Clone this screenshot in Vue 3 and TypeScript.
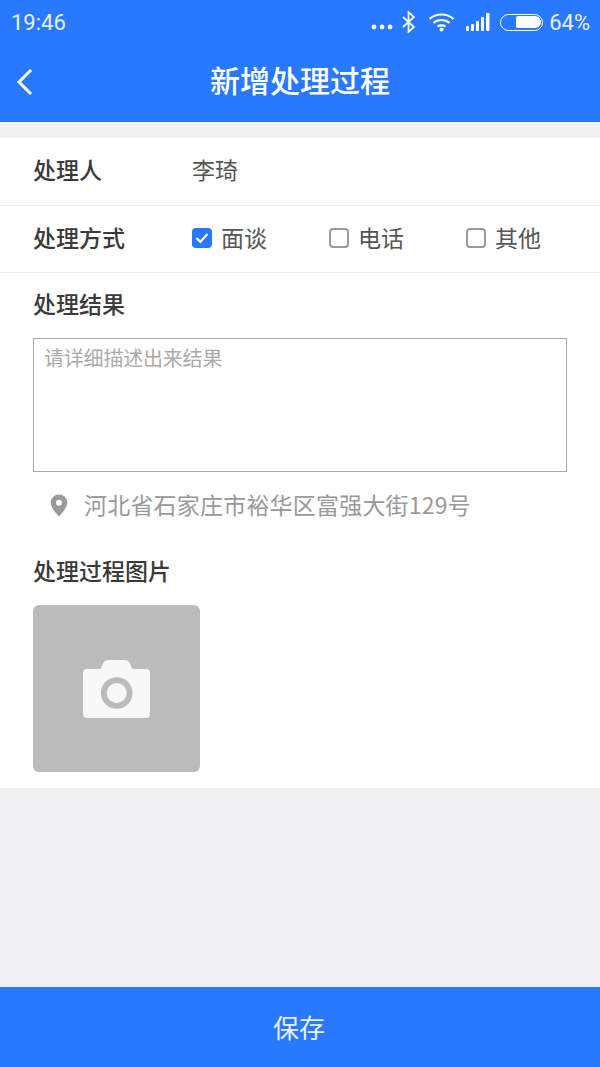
<script setup lang="ts">
import { ref } from "vue";

const methods = ["面谈", "电话", "其他"];
const method = ref("面谈");
const note = ref("");
</script>

<template>
  <div class="page">
    <header class="top">
      <div class="status">
        <span class="time">19:46</span>
        <div class="status-right">
          <svg class="dots" width="22" height="6" viewBox="0 0 22 6"><circle cx="3" cy="3" r="2.4" /><circle cx="11" cy="3" r="2.4" /><circle cx="19" cy="3" r="2.4" /></svg>
          <svg class="bt" width="16" height="22" viewBox="0 0 16 22"><path d="M2 6l11 10-5.500 5V1l5.500 5L2 16" fill="none" stroke="#fff" stroke-width="1.700" /></svg>
          <svg class="wifi" width="27" height="20" viewBox="0 0 27 20"><g fill="none" stroke="#fff" stroke-width="2.200"><path d="M1.500 7C8 1 19 1 25.500 7" /><path d="M5.500 11C10 7 17 7 21.500 11" /><path d="M9.500 14.500C11.500 13 15.500 13 17.500 14.500" /></g><circle cx="13.500" cy="17.500" r="2" fill="#fff" /></svg>
          <svg class="signal" width="25" height="20" viewBox="0 0 25 20" fill="#fff"><rect x="0" y="14" width="3" height="5" rx="1" /><rect x="5" y="12" width="3" height="7" rx="1" /><rect x="10" y="9" width="3" height="10" rx="1" /><rect x="15" y="5" width="3" height="14" rx="1" /><rect x="20" y="1" width="3.500" height="18" rx="1" /></svg>
          <div class="battery"><div class="battery-fill"></div></div>
          <span class="pct">64%</span>
        </div>
      </div>
      <div class="nav">
        <svg class="back" width="18" height="28" viewBox="0 0 18 28"><path d="M15 2L3 14l12 12" fill="none" stroke="#fff" stroke-width="3" /></svg>
        <h1 class="title">新增处理过程</h1>
      </div>
    </header>

    <main class="form">
      <div class="row">
        <span class="label">处理人</span>
        <span class="value">李琦</span>
      </div>
      <div class="row">
        <span class="label">处理方式</span>
        <div class="options">
          <label v-for="m in methods" :key="m" class="option" @click="method = m">
            <span class="box" :class="{ checked: method === m }">
              <svg v-if="method === m" width="14" height="12" viewBox="0 0 14 12"><path d="M1.500 6l3.800 3.800L12.500 2" fill="none" stroke="#fff" stroke-width="2.200" /></svg>
            </span>
            <span class="option-text">{{ m }}</span>
          </label>
        </div>
      </div>

      <section class="result">
        <div class="label">处理结果</div>
        <textarea v-model="note" class="note" placeholder="请详细描述出来结果"></textarea>
        <div class="location">
          <svg class="pin" width="18" height="23" viewBox="0 0 18 23"><path fill-rule="evenodd" d="M9 0.500a8.300 8.300 0 0 1 8.300 8.300C17.300 14 9 22.500 9 22.500S0.700 14 0.700 8.800A8.300 8.300 0 0 1 9 0.500zm0 5.300a3 3 0 1 0 0 6 3 3 0 0 0 0-6z" fill="#999" /></svg>
          <span class="address">河北省石家庄市裕华区富强大街129号</span>
        </div>
        <div class="label pics">处理过程图片</div>
        <div class="photo">
          <svg width="67" height="58" viewBox="0 0 67 58"><path fill-rule="evenodd" d="M4 9h13q1 0 2-3q1.500-6 6-6h17q4.500 0 6 6q1 3 2 3h13q4 0 4 4v41q0 4-4 4H4q-4 0-4-4V13q0-4 4-4zm29.700 8.200a15.800 15.800 0 1 0 0 31.600 15.800 15.800 0 0 0 0-31.600zm0 5.800a10 10 0 1 1 0 20 10 10 0 0 1 0-20z" fill="#f8f8f8" /></svg>
        </div>
      </section>
    </main>

    <div class="spacer"></div>

    <button class="save">保存</button>
  </div>
</template>

<style>
body {
  margin: 0;
}
</style>

<style scoped>
.page {
  width: 600px;
  height: 1067px;
  display: flex;
  flex-direction: column;
  background: #f0f1f3;
  font-family: "Noto Sans CJK SC", "Noto Sans", sans-serif;
  overflow: hidden;
}

.top {
  height: 122px;
  background: #2979ff;
  color: #fff;
  flex-shrink: 0;
}

.status {
  height: 44px;
  padding: 0 10px 0 11px;
  display: flex;
  align-items: center;
  justify-content: space-between;
  font-family: "Roboto", sans-serif;
  font-size: 22px;
  color: #e8f0ff;
}

.status-right {
  display: flex;
  align-items: center;
}

.dots {
  fill: #fff;
  margin-top: 10px;
  margin-right: 8px;
}

.bt {
  margin-right: 11px;
}

.wifi {
  margin-right: 11px;
}

.signal {
  margin-right: 9px;
}

.battery {
  width: 43px;
  height: 17px;
  box-sizing: border-box;
  border: 1.500px solid #fff;
  border-radius: 9px;
  margin-right: 6px;
  padding: 1.500px;
  display: flex;
  justify-content: flex-end;
}

.battery-fill {
  width: 25px;
  height: 100%;
  background: #fff;
  border-radius: 2px 6px 6px 2px;
}

.nav {
  height: 78px;
  box-sizing: border-box;
  padding-bottom: 8px;
  position: relative;
  display: flex;
  align-items: center;
  justify-content: center;
}

.back {
  position: absolute;
  left: 16px;
  top: 24px;
}

.title {
  margin: 0;
  font-size: 30px;
  font-weight: 500;
  line-height: 44px;
}

.form {
  margin-top: 16px;
  background: #fff;
  height: 650px;
  flex-shrink: 0;
  box-sizing: border-box;
}

.row {
  height: 67px;
  box-sizing: border-box;
  padding-left: 33px;
  padding-bottom: 2px;
  display: flex;
  align-items: center;
  border-bottom: 1px solid #eeeeee;
}

.row:first-child {
  height: 68px;
}

.label {
  font-size: 23px;
  font-weight: 500;
  color: #3a3a3a;
  line-height: 34px;
}

.row .label {
  width: 159px;
  flex-shrink: 0;
  margin-bottom: 3px;
}

.value {
  font-size: 23px;
  color: #555;
  margin-bottom: 3px;
}

.options {
  display: flex;
}

.option {
  width: 137px;
  display: flex;
  align-items: center;
}

.box {
  width: 20px;
  height: 20px;
  box-sizing: border-box;
  border: 2px solid #999;
  border-radius: 4px;
  margin-right: 9px;
  display: flex;
  align-items: center;
  justify-content: center;
  flex-shrink: 0;
}

.box.checked {
  border-color: #2979ff;
  background: #2979ff;
}

.option-text {
  font-size: 23px;
  color: #555;
  margin-bottom: 3px;
}

.result {
  padding: 13px 33px 0;
}

.note {
  display: block;
  width: 534px;
  height: 134px;
  margin-top: 18px;
  padding: 4px 10px;
  box-sizing: border-box;
  border: 1px solid #aaa;
  border-radius: 0;
  outline: none;
  resize: none;
  font-family: inherit;
  font-size: 20px;
  letter-spacing: -0.2px;
  line-height: 29px;
  color: #333;
}

.note::placeholder {
  color: #aaa;
  opacity: 1;
}

.location {
  height: 34px;
  margin-top: 15px;
  padding-left: 17px;
  display: flex;
  align-items: center;
  gap: 16px;
  font-size: 23px;
  color: #999;
}

.pin {
  margin-top: 2px;
}

.address {
  letter-spacing: 0.2px;
}

.pics {
  margin-top: 32px;
}

.photo {
  width: 167px;
  height: 167px;
  margin-top: 18px;
  background: #bbb;
  border-radius: 6px;
  display: flex;
  align-items: center;
  justify-content: center;
}

.spacer {
  flex: 1;
}

.save {
  height: 80px;
  flex-shrink: 0;
  border: none;
  background: #2979ff;
  color: #e8f0ff;
  font-family: inherit;
  font-size: 26px;
  padding: 0 2px 2px 0;
}
</style>
